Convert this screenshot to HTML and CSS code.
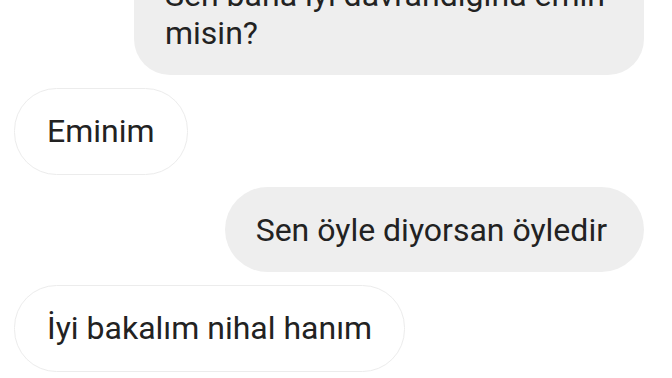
FILE: index.html
```html
<!DOCTYPE html>
<html lang="tr">
<head>
    <meta charset="UTF-8">
    <meta name="viewport" content="width=device-width, initial-scale=1.0">
    <title>Sohbet</title>
    <link rel="stylesheet" href="styles.css">
</head>
<body>
    <div class="chat">
        <div class="msg sent first">Sen bana iyi davrandığına emin misin?</div>
        <div class="msg received">Eminim</div>
        <div class="msg sent">Sen öyle diyorsan öyledir</div>
        <div class="msg received">İyi bakalım nihal hanım</div>
    </div>
</body>
</html>
```

FILE: styles.css
```css
* {
    box-sizing: border-box;
    margin: 0;
    padding: 0;
}

body {
    background: #ffffff;
    font-family: Roboto, "Noto Sans", sans-serif;
    color: #222222;
    overflow: hidden;
}

.chat {
    display: flex;
    flex-direction: column;
    gap: 12.5px;
    padding: 0 28px 0 14px;
}

.msg {
    font-size: 32px;
    line-height: 38px;
    padding: 23.5px 32px;
    border-radius: 42.5px;
    max-width: 510px;
}

.first {
    margin-top: -48px;
    border-radius: 36px;
}

.sent {
    align-self: flex-end;
    background: #eeeeee;
    padding-left: 31px;
    padding-right: 37px;
}

.received {
    align-self: flex-start;
    background: #ffffff;
    border: 1.5px solid #ececec;
}
```
